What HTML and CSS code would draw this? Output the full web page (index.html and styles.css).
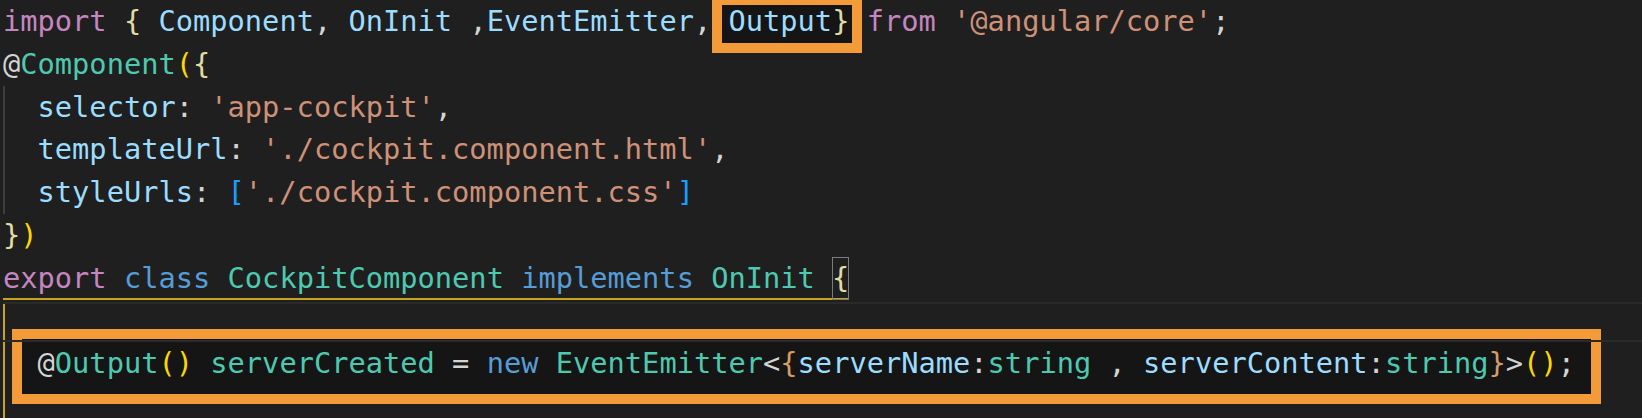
FILE: index.html
```html
<!DOCTYPE html>
<html lang="en">
<head>
    <meta charset="UTF-8">
    <meta name="viewport" content="width=device-width, initial-scale=1.0">
    <title>cockpit.component.ts</title>
    <link rel="stylesheet" href="styles.css">
</head>
<body>
    <div class="editor">
        <div class="line"><span class="kw">import</span> <span class="bp">{</span> <span class="var">Component</span>, <span class="var">OnInit</span> ,<span class="var">EventEmitter</span>, <span class="var">Output</span><span class="bp">}</span> <span class="kw">from</span> <span class="str">'@angular/core'</span>;</div>
        <div class="line">@<span class="type">Component</span><span class="b1">(</span><span class="bp">{</span></div>
        <div class="indent">
            <div class="line">  <span class="var">selector</span>: <span class="str">'app-cockpit'</span>,</div>
            <div class="line">  <span class="var">templateUrl</span>: <span class="str">'./cockpit.component.html'</span>,</div>
            <div class="line">  <span class="var">styleUrls</span>: <span class="b3">[</span><span class="str">'./cockpit.component.css'</span><span class="b3">]</span></div>
        </div>
        <div class="line"><span class="bp">}</span><span class="b1">)</span></div>
        <div class="line"><span class="guide"><span class="kw">export</span> <span class="key">class</span> <span class="type">CockpitComponent</span> <span class="key">implements</span> <span class="type">OnInit</span> <span class="match bp">{</span></span></div>
        <div class="scope">
            <div class="line current"></div>
            <div class="line">  @<span class="type">Output</span><span class="b1">()</span> <span class="type">serverCreated</span> = <span class="key">new</span> <span class="type">EventEmitter</span>&lt;<span class="b2">{</span><span class="var">serverName</span>:<span class="type">string</span> , <span class="var">serverContent</span>:<span class="type">string</span><span class="b2">}</span>&gt;<span class="b1">()</span>;</div>
            <div class="line"></div>
        </div>

        <div class="mark mark-import"></div>
        <div class="mark mark-output"></div>
    </div>
</body>
</html>
```

FILE: styles.css
```css
html, body {
    margin: 0;
    background: #1f1f1f;
}
body {
    width: 1642px;
    height: 418px;
    overflow: hidden;
}
.editor {
    position: relative;
    z-index: 0;
    padding-left: 3px;
    font-family: "DejaVu Sans Mono", "Liberation Mono", monospace;
    font-size: 28.7px;
    line-height: 42.8px;
    color: #d4d4d4;
}
.line {
    height: 42.8px;
    white-space: pre;
}
.indent {
    box-shadow: inset 2px 0 #3e3e3e;
}
.scope {
    box-shadow: inset 2px 0 #c6a51c;
}
.guide {
    display: inline-block;
    vertical-align: top;
    height: 42.8px;
    box-shadow: inset 0 -2px #c6a51c;
}
.match {
    display: inline-block;
    vertical-align: top;
    height: 42.8px;
    box-shadow: inset 0 0 0 1px #7c7c7c;
}
.current {
    box-sizing: border-box;
    border-top: 2px solid #2a2a2a;
    border-bottom: 2px solid #2a2a2a;
    margin-top: 2px;
    height: 40.8px;
}
.kw { color: #c586c0; }
.key { color: #569cd6; }
.var { color: #9cdcfe; }
.type { color: #4ec9b0; }
.str { color: #ce9178; }
.bp { color: #e0dca4; }
.b1 { color: #ffd700; }
.b2 { color: #d59c63; }
.b3 { color: #179fff; }

/* orange annotation boxes drawn over the screenshot */
.mark {
    position: absolute;
    z-index: -1;
    box-sizing: border-box;
    border: 10px solid #f29b38;
    background: #151515;
}
.mark-import {
    left: 712px;
    top: -5px;
    width: 150px;
    height: 58px;
}
.mark-output {
    left: 12px;
    top: 329px;
    width: 1589px;
    height: 75px;
}
```
